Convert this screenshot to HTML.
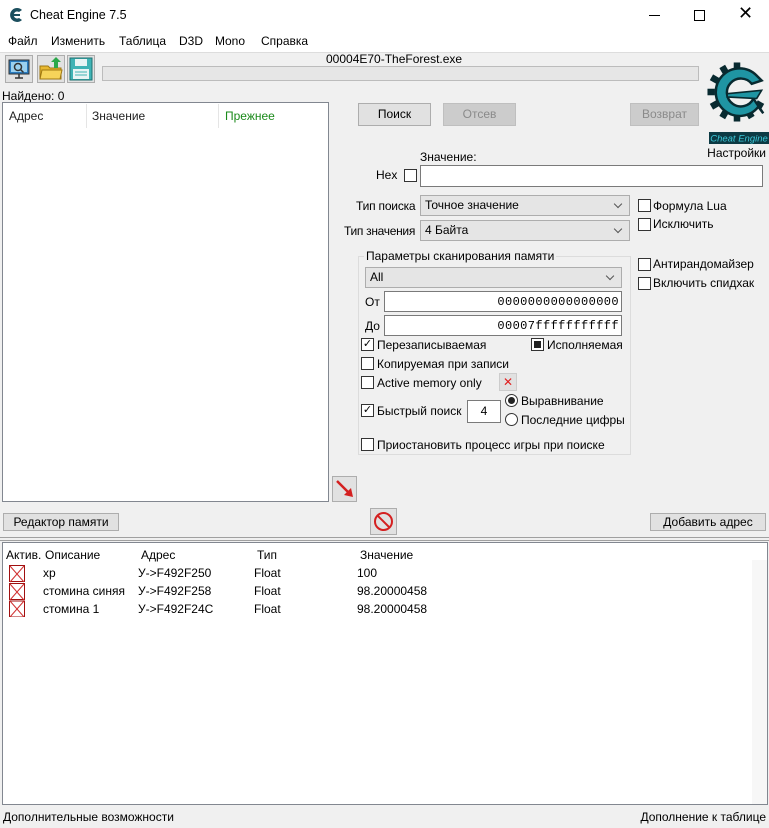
<!DOCTYPE html>
<html><head><meta charset="utf-8"><style>
*{box-sizing:border-box;margin:0;padding:0}
body{width:769px;height:828px;background:#f0f0f0;font:12px "Liberation Sans","DejaVu Sans",sans-serif;color:#000;position:relative;overflow:hidden}
.a{position:absolute;white-space:nowrap}
.btn{position:absolute;background:#e1e1e1;border:1px solid #adadad;text-align:center;line-height:21px}
.dis{background:#cccccc;border-color:#bfbfbf;color:#8a8a8a}
.inp{position:absolute;background:#fff;border:1px solid #7a7a7a}
.cb{position:absolute;width:13px;height:13px;border:1px solid #333;background:#fff}
.cmb{position:absolute;background:#e5e5e5;border:1px solid #adadad;padding-left:4px;line-height:19px}
.cmb:after{content:"";position:absolute;right:8px;top:5px;width:5px;height:5px;border-right:1px solid #555;border-bottom:1px solid #555;transform:rotate(45deg)}
</style></head><body>
<div class="a" style="left:0;top:0;width:769px;height:52px;background:#fff"></div>
<svg class="a" style="left:7px;top:6px" width="18" height="18" viewBox="0 0 18 18"><path d="M15 4 A7 7 0 1 0 15 14 L12 12 A3.5 3.5 0 1 1 12 6 Z" fill="#1c4f5e"/><path d="M5 9h8" stroke="#1c4f5e" stroke-width="2"/></svg>
<div class="a" style="left:30px;top:8px;font-size:12.5px">Cheat Engine 7.5</div>
<div class="a" style="left:649px;top:15px;width:11px;border-top:1px solid #000"></div>
<div class="a" style="left:694px;top:10px;width:11px;height:11px;border:1px solid #000"></div>
<div class="a" style="left:738px;top:3px;font-size:18px;font-weight:300">✕</div>
<div class="a" style="left:8px;top:34px">Файл</div>
<div class="a" style="left:51px;top:34px">Изменить</div>
<div class="a" style="left:119px;top:34px">Таблица</div>
<div class="a" style="left:179px;top:34px">D3D</div>
<div class="a" style="left:215px;top:34px">Mono</div>
<div class="a" style="left:261px;top:34px">Справка</div>
<div class="a" style="left:0;top:52px;width:769px;height:1px;background:#ddd"></div>
<div class="a" style="left:5px;top:55px;width:28px;height:28px;background:#e1e1e1;border:1px solid #adadad"></div>
<svg class="a" style="left:8px;top:58px" width="22" height="22"><rect x="1" y="2" width="20" height="14" fill="#2a7bbf" stroke="#333"/><rect x="3" y="4" width="16" height="10" fill="#9ad0ef"/><circle cx="10" cy="9" r="3.5" fill="none" stroke="#333" stroke-width="1.5"/><path d="M12.5 11.5l3 3M7 20h8M11 16v4" stroke="#333" stroke-width="1.5"/></svg>
<div class="a" style="left:37px;top:55px;width:28px;height:28px;background:#e1e1e1;border:1px solid #adadad"></div>
<svg class="a" style="left:39px;top:57px" width="24" height="24"><path d="M1 9h8l2 2h11v11H1z" fill="#e8b830" stroke="#a07810"/><path d="M3 13h20l-2 9H1z" fill="#f6d45a" stroke="#a07810"/><path d="M15 11V5h-3l5-5 5 5h-3v6z" fill="#2aa84a"/></svg>
<div class="a" style="left:67px;top:55px;width:28px;height:28px;background:#e1e1e1;border:1px solid #adadad"></div>
<svg class="a" style="left:69px;top:57px" width="24" height="24"><rect x="1" y="1" width="22" height="22" fill="#3fb3b5" stroke="#1d6f70"/><rect x="6" y="2" width="12" height="7" fill="#e8f4f4"/><rect x="4" y="12" width="16" height="10" fill="#e8f4f4"/><path d="M6 15h12M6 18h12" stroke="#3fb3b5"/></svg>
<div class="a" style="left:326px;top:52px">00004E70-TheForest.exe</div>
<div class="a" style="left:102px;top:66px;width:597px;height:15px;background:#e6e6e6;border:1px solid #bcbcbc"></div>
<svg class="a" style="left:703px;top:52px" width="66" height="94" viewBox="0 0 66 94"><g transform="translate(34 40) scale(0.82)"><g fill="#082a30"><rect x="-4" y="-36" width="8" height="9" transform="rotate(-60)"/><rect x="-4" y="-36" width="8" height="9" transform="rotate(-30)"/><rect x="-4" y="-36" width="8" height="9" transform="rotate(0)"/><rect x="-4" y="-36" width="8" height="9" transform="rotate(-90)"/><rect x="-4" y="-36" width="8" height="9" transform="rotate(-120)"/><rect x="-4" y="-36" width="8" height="9" transform="rotate(-150)"/><rect x="-4" y="-36" width="8" height="9" transform="rotate(180)"/><rect x="-4" y="-36" width="8" height="9" transform="rotate(150)"/><rect x="-4" y="-36" width="8" height="9" transform="rotate(120)"/></g><path d="M24 -20 A29 29 0 1 0 26 18 L32 26 L20 8 A17 17 0 1 1 18 -10 L30 -14 Z" fill="#1f95a3" stroke="#082a30" stroke-width="3"/><path d="M-12 2L30 -2L24 8L-12 6Z" fill="#1f95a3" stroke="#082a30" stroke-width="2"/></g><rect x="6" y="80" width="60" height="12" fill="#0c3a44"/><text x="36" y="89.5" font-size="9.5" font-style="italic" fill="#3cc8d8" text-anchor="middle" font-family="Liberation Sans">Cheat Engine</text></svg>
<div class="a" style="left:2px;top:89px">Найдено: 0</div>
<div class="a" style="left:2px;top:102px;width:327px;height:400px;background:#fff;border:1px solid #828790"></div>
<div class="a" style="left:9px;top:109px;color:#222">Адрес</div>
<div class="a" style="left:86px;top:104px;width:1px;height:24px;background:#e5e5e5"></div>
<div class="a" style="left:92px;top:109px;color:#222">Значение</div>
<div class="a" style="left:218px;top:104px;width:1px;height:24px;background:#e5e5e5"></div>
<div class="a" style="left:225px;top:109px;color:#1a8a1a">Прежнее</div>
<div class="btn" style="left:358px;top:103px;width:73px;height:23px">Поиск</div>
<div class="btn dis" style="left:443px;top:103px;width:73px;height:23px">Отсев</div>
<div class="btn dis" style="left:630px;top:103px;width:69px;height:23px">Возврат</div>
<div class="a" style="right:3px;top:146px">Настройки</div>
<div class="a" style="left:420px;top:150px">Значение:</div>
<div class="a" style="left:376px;top:168px">Hex</div>
<div class="cb" style="left:404px;top:169px"></div>
<div class="inp" style="left:420px;top:165px;width:343px;height:22px"></div>
<div class="a" style="left:356px;top:199px;letter-spacing:-0.2px">Тип поиска</div>
<div class="cmb" style="left:420px;top:195px;width:210px;height:21px">Точное значение</div>
<div class="a" style="left:344px;top:224px;letter-spacing:-0.3px">Тип значения</div>
<div class="cmb" style="left:420px;top:220px;width:210px;height:21px">4 Байта</div>
<div class="cb" style="left:638px;top:199px"></div><div class="a" style="left:653px;top:199px">Формула Lua</div>
<div class="cb" style="left:638px;top:218px"></div><div class="a" style="left:653px;top:217px">Исключить</div>
<div class="cb" style="left:638px;top:258px"></div><div class="a" style="left:653px;top:257px">Антирандомайзер</div>
<div class="cb" style="left:638px;top:277px"></div><div class="a" style="left:653px;top:276px">Включить спидхак</div>
<div class="a" style="left:358px;top:256px;width:273px;height:199px;border:1px solid #dcdcdc"></div>
<div class="a" style="left:364px;top:249px;background:#f0f0f0;padding:0 2px">Параметры сканирования памяти</div>
<div class="cmb" style="left:365px;top:267px;width:257px;height:21px">All</div>
<div class="a" style="left:365px;top:295px">От</div>
<div class="inp" style="left:384px;top:291px;width:238px;height:21px;font-family:'Liberation Mono';text-align:right;padding:3px 2px 0 0;letter-spacing:0.4px">0000000000000000</div>
<div class="a" style="left:365px;top:319px">До</div>
<div class="inp" style="left:384px;top:315px;width:238px;height:21px;font-family:'Liberation Mono';text-align:right;padding:3px 2px 0 0;letter-spacing:0.4px">00007fffffffffff</div>
<div class="cb" style="left:361px;top:338px;font-size:11px;line-height:11px;text-align:center">✓</div><div class="a" style="left:377px;top:338px">Перезаписываемая</div>
<div class="cb" style="left:531px;top:338px"><div style="margin:2px;width:7px;height:7px;background:#222"></div></div><div class="a" style="left:547px;top:338px">Исполняемая</div>
<div class="cb" style="left:361px;top:357px"></div><div class="a" style="left:377px;top:357px">Копируемая при записи</div>
<div class="cb" style="left:361px;top:376px"></div><div class="a" style="left:377px;top:376px">Active memory only</div>
<div class="a" style="left:499px;top:373px;width:18px;height:18px;background:#e1e1e1;border:1px solid #ccc;color:#e02020;text-align:center;font-weight:bold;line-height:16px">✕</div>
<div class="cb" style="left:361px;top:404px;font-size:11px;line-height:11px;text-align:center">✓</div><div class="a" style="left:377px;top:404px">Быстрый поиск</div>
<div class="inp" style="left:467px;top:400px;width:34px;height:23px;text-align:center;line-height:20px">4</div>
<div class="a" style="left:505px;top:394px;width:13px;height:13px;border:1px solid #333;border-radius:50%;background:#fff"><div style="margin:2px;width:7px;height:7px;border-radius:50%;background:#222"></div></div>
<div class="a" style="left:521px;top:394px">Выравнивание</div>
<div class="a" style="left:505px;top:413px;width:13px;height:13px;border:1px solid #333;border-radius:50%;background:#fff"></div>
<div class="a" style="left:521px;top:413px">Последние цифры</div>
<div class="cb" style="left:361px;top:438px"></div><div class="a" style="left:377px;top:438px">Приостановить процесс игры при поиске</div>
<div class="a" style="left:332px;top:476px;width:25px;height:26px;background:#e1e1e1;border:1px solid #adadad"></div>
<svg class="a" style="left:334px;top:478px" width="22" height="22"><path d="M3 3l13 13" stroke="#d42020" stroke-width="2.5"/><path d="M19 19l-9-2 7-7z" fill="#d42020"/></svg>
<div class="btn" style="left:3px;top:513px;width:116px;height:18px;line-height:16px">Редактор памяти</div>
<div class="a" style="left:370px;top:508px;width:27px;height:27px;background:#e1e1e1;border:1px solid #adadad"></div>
<svg class="a" style="left:373px;top:511px" width="21" height="21"><circle cx="10.5" cy="10.5" r="8.5" fill="none" stroke="#d42020" stroke-width="2"/><path d="M4.5 4.5l12 12" stroke="#d42020" stroke-width="2"/></svg>
<div class="btn" style="left:650px;top:513px;width:116px;height:18px;line-height:16px">Добавить адрес</div>
<div class="a" style="left:0;top:537px;width:769px;height:4px;border-top:1px solid #a0a0a0;border-bottom:1px solid #a0a0a0"></div>
<div class="a" style="left:2px;top:542px;width:766px;height:263px;background:#fff;border:1px solid #828790"></div>
<div class="a" style="left:6px;top:548px">Актив.</div>
<div class="a" style="left:45px;top:548px">Описание</div>
<div class="a" style="left:141px;top:548px">Адрес</div>
<div class="a" style="left:257px;top:548px">Тип</div>
<div class="a" style="left:360px;top:548px">Значение</div>
<div class="a" style="left:752px;top:560px;width:15px;height:244px;background:#f7f7f7"></div>
<svg class="a" style="left:9px;top:565px" width="16" height="52"><g fill="#fff" stroke="#a01010"><rect x="0.5" y="0.5" width="15" height="16"/><rect x="0.5" y="18.5" width="15" height="16"/><rect x="0.5" y="36" width="15" height="16"/></g><path d="M1 1l14 16M15 1L1 17M1 19l14 16M15 19L1 35M1 36l14 16M15 36L1 52" stroke="#d03030"/></svg>
<div class="a" style="left:43px;top:566px">xp</div><div class="a" style="left:138px;top:566px">У-&gt;F492F250</div><div class="a" style="left:254px;top:566px">Float</div><div class="a" style="left:357px;top:566px">100</div>
<div class="a" style="left:43px;top:584px">стомина синяя</div><div class="a" style="left:138px;top:584px">У-&gt;F492F258</div><div class="a" style="left:254px;top:584px">Float</div><div class="a" style="left:357px;top:584px">98.20000458</div>
<div class="a" style="left:43px;top:602px">стомина 1</div><div class="a" style="left:138px;top:602px">У-&gt;F492F24C</div><div class="a" style="left:254px;top:602px">Float</div><div class="a" style="left:357px;top:602px">98.20000458</div>
<div class="a" style="left:3px;top:810px">Дополнительные возможности</div>
<div class="a" style="right:3px;top:810px">Дополнение к таблице</div>
</body></html>
